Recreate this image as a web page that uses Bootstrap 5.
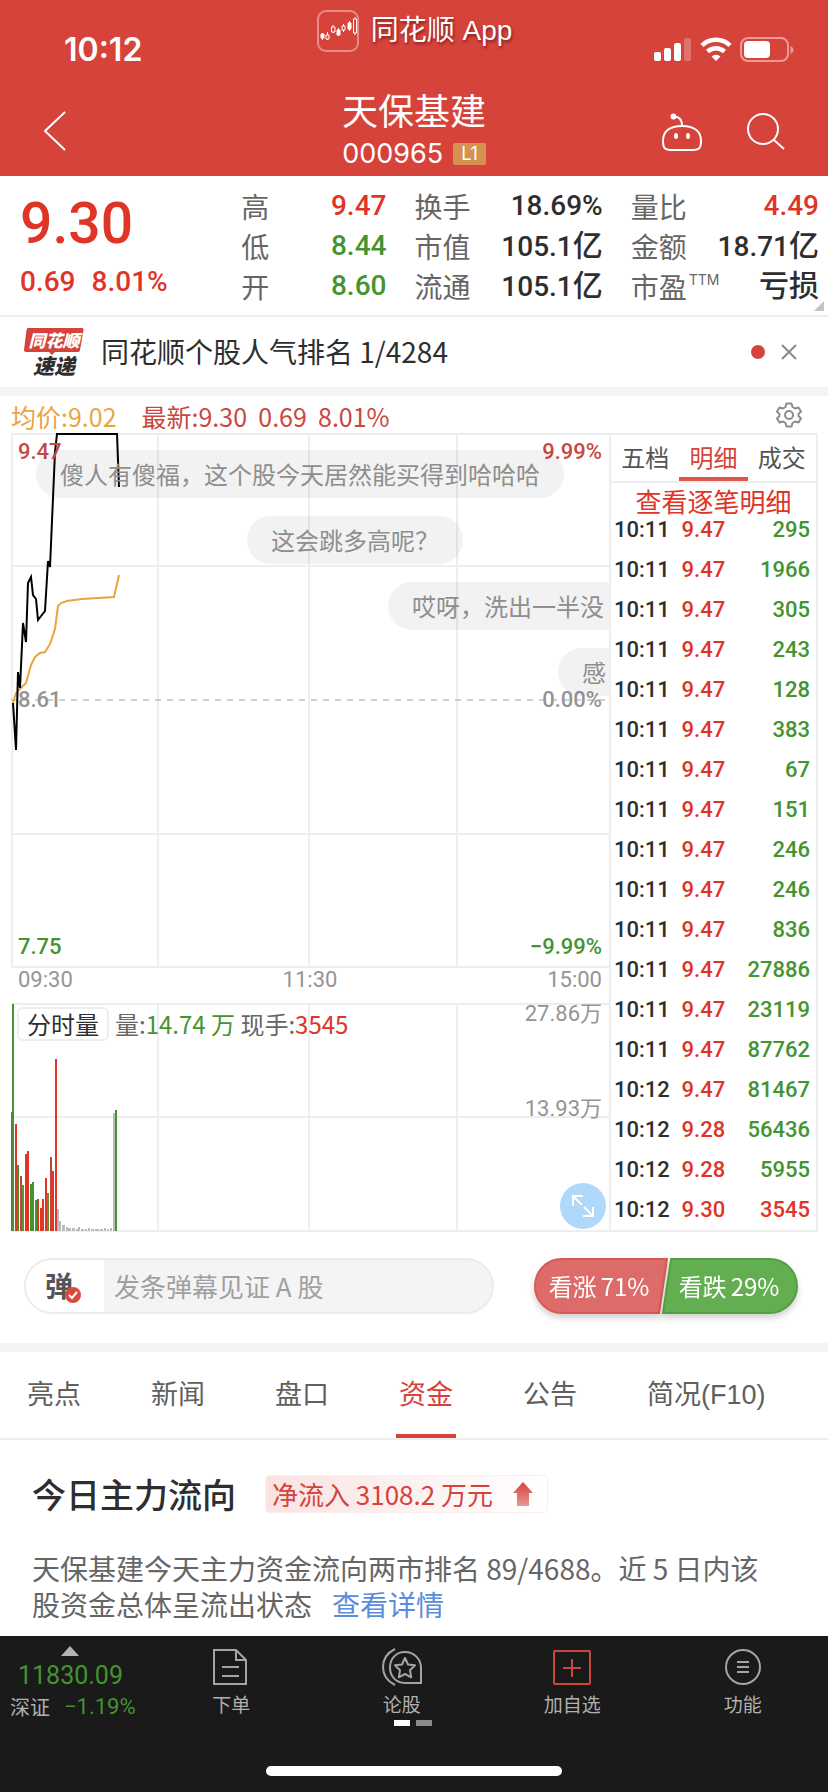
<!DOCTYPE html>
<html lang="zh-CN">
<head>
<meta charset="utf-8">
<meta name="viewport" content="width=device-width, initial-scale=1">
<title>天保基建 000965</title>
<link href="https://cdn.jsdelivr.net/npm/bootstrap@5.3.0/dist/css/bootstrap.min.css" rel="stylesheet">
<style>
  :root { --up:#d6433b; --rise:#de3527; --fall:#43942f; --ink:#2e2e2e; --soft:#666; --mute:#949494; --line:#eee; --num:Roboto,"Noto Sans CJK SC",sans-serif; }
  body { font-family:"Noto Sans CJK SC",sans-serif; color:var(--ink); background:#fff; line-height:1.2; min-height:100vh; display:flex; flex-direction:column; overflow-x:hidden; }
  h1,h2,p,dl,dt,dd { margin:0; font-weight:400; }
  button { border:0; background:none; padding:0; color:inherit; }
  a { text-decoration:none; color:inherit; }
  svg { display:block; }
  .num { font-family:var(--num); }
  .rise { color:var(--rise); } .fall { color:var(--fall); }
  .legend .avg { color:#eba53f; }
  .legend .last, .tag.hi { color:#c9473f; }
  .tag.mid { color:var(--mute); }

  .top-bar { background:var(--up); color:#fff; height:176px; }
  .status-row { display:grid; grid-template-columns:1fr auto 1fr; height:86px; padding:0 34px; }
  .clock { font:600 32px/36px Inter,sans-serif; margin:32px 0 0 30px; }
  .brand { padding-top:10px; column-gap:11px; }
  .brand-name { font:400 28px/42px "Liberation Sans","Noto Sans CJK SC",sans-serif; text-shadow:1px 2px 3px rgba(80,0,0,.6); }
  .status-icons { margin-top:37px; }
  .title-row { display:grid; grid-template-columns:1fr auto 1fr; height:90px; padding:0 43px; }
  .title-row h1 { font-size:36px; line-height:46px; }
  .code { font:400 27px/44px Inter,sans-serif; }
  .code-row { column-gap:10px; }
  .level { background:#d4914f; font:400 18px/22px Inter,sans-serif; padding:0 8px; border-radius:2px; }
  .tools { margin-top:26px; column-gap:42px; }

  .quote { position:relative; display:grid; grid-template-columns:193fr 145fr 188fr 188fr; column-gap:28px; padding:10px 9px 9px 20px; border-bottom:2px solid var(--line); }
  .price { font:500 57px/76px var(--num); color:var(--rise); }
  .change { font:500 28px/40px var(--num); color:var(--rise); column-gap:16px; }
  .quote dl > div { display:flex; justify-content:space-between; height:40px; line-height:40px; }
  .quote dt { font-size:28px; color:var(--soft); white-space:nowrap; }
  .quote dt sup { font:400 14px/14px Inter,sans-serif; top:-13px; margin-left:2px; }
  .quote dd { font:500 28px/40px var(--num); white-space:nowrap; }
  .quote dd span { font-size:30px; }
  .corner { position:absolute; right:4px; bottom:4px; }

  .flash { height:70px; padding:0 31px 0 24px; }
  .flash-text { font-size:28px; margin-left:17px; }
  .flash-logo { width:60px; text-align:center; font-style:italic; font-weight:900; }
  .flash-logo .l1 { position:relative; z-index:0; display:block; height:26px; line-height:24px; font-size:17px; color:#fff; }
  .flash-logo .l1 svg { position:absolute; left:0; top:0; z-index:-1; }
  .flash-logo .l2 { display:block; font-size:21px; line-height:22px; }
  .hot-dot { width:14px; height:14px; border-radius:50%; background:var(--up); }
  .band { height:9px; background:#f4f4f4; }

  .market { padding:0 10px 0 11px; }
  .legend { height:37px; font-size:25px; line-height:40px; white-space:nowrap; column-gap:25px; }
  .panels { display:flex; height:799px; }
  .charts { flex:598 1 0; min-width:0; position:relative; overflow:hidden; }
  .charts svg.plot { width:100%; }
  .plot * { vector-effect:non-scaling-stroke; }
  .grid-line { stroke:var(--line); stroke-width:2; fill:none; }
  .price-box { position:relative; height:535px; }
  .price-box .tag { position:absolute; font:500 22px/26px var(--num); }
  .times { display:flex; justify-content:space-between; height:35px; padding:0 7px; font:400 22px/24px var(--num); color:var(--mute); }
  .vol-box { position:relative; height:229px; }
  .vol-head { position:absolute; left:6px; top:4px; font-size:24px; line-height:32px; white-space:nowrap; color:var(--soft); }
  .vol-btn { border:2px solid var(--line); border-radius:6px; color:var(--ink); padding:0 8px; line-height:30px; background:#fff; margin-right:6px; }
  .vol-tag { position:absolute; right:7px; font:400 22px/28px var(--num); color:var(--mute); }
  .chat { position:absolute; height:48px; border-radius:24px; background:rgba(0,0,0,.05); color:#8e8e8e; font-size:24px; line-height:48px; padding:0 24px; white-space:nowrap; }
  .zoom-btn { position:absolute; right:3px; bottom:3px; width:46px; height:46px; border-radius:50%; background:#b0d8fb; }

  .ticks { flex:205 1 0; min-width:0; border:2px solid var(--line); display:flex; flex-direction:column; }
  .tick-tabs { display:flex; border-bottom:2px solid var(--line); height:48px; }
  .tick-tabs button { flex:1; font-size:24px; line-height:30px; padding-bottom:2px; color:#555; }
  .tick-tabs .on { color:var(--up); box-shadow:inset 0 -4px 0 #d9574b; }
  .tick-more { font-size:26px; line-height:36px; padding-bottom:2px; color:var(--rise); }
  .tick-view { flex:1 1 0; min-height:0; overflow:hidden; display:flex; flex-direction:column; justify-content:flex-end; }
  .tick-list { width:100%; font:500 22px/40px var(--num); }
  .tick-list td { height:40px; padding:0; }
  .tick-list td:first-child { padding-left:3px; }
  .tick-list td:last-child { padding-right:6px; text-align:right; }

  .act-row { padding:26px 30px 29px 24px; display:flex; justify-content:space-between; }
  .say { width:470px; height:56px; border:2px solid #ececec; border-radius:28px; background:#f4f4f4; overflow:hidden; display:flex; }
  .say-mode { width:78px; background:#fff; font-size:28px; font-weight:700; color:#555; position:relative; padding-right:12px; }
  .say-mode svg { position:absolute; right:23px; bottom:9px; }
  .say input { flex:1; min-width:0; border:0; background:none; font-size:26px; padding:0 10px; outline:0; }
  .say input::placeholder { color:#a0a0a0; opacity:1; }
  .vote { display:flex; width:264px; height:56px; }
  .vote button { color:#fff; font-size:24px; white-space:nowrap; filter:drop-shadow(0 4px 3px rgba(0,0,0,.18)); position:relative; z-index:0; flex:1; }
  .vote svg { position:absolute; z-index:-1; top:0; left:0; width:100%; height:100%; overflow:visible; }

  .sections { display:flex; height:88px; padding:0 27px; column-gap:70px; border-bottom:2px solid var(--line); }
  .sections a { font:400 27px/86px "Liberation Sans","Noto Sans CJK SC",sans-serif; color:#606060; white-space:nowrap; }
  .sections a.on { color:var(--up); margin:0 -3px; padding:0 3px; box-shadow:inset 0 -4px 0 var(--up); }

  .flow { padding:32px 60px 0 32px; }
  .flow h2 { font-size:34px; font-weight:500; line-height:44px; }
  .flow-tag { margin-left:29px; height:38px; padding:0 14px 0 6px; border:1px solid #fbeeed; border-radius:4px; background:linear-gradient(90deg,#f9e3e2,#fff); color:var(--up); font-size:26px; line-height:34px; white-space:nowrap; column-gap:20px; }
  .flow p { margin-top:34px; font-size:28px; line-height:36px; color:var(--soft); }
  .flow p a { color:#5b8cdb; margin-left:20px; }

  .dock { margin-top:auto; height:156px; background:#1a1a1a; color:#b0b0b0; position:relative; }
  .dock-items { display:flex; }
  .dock-index { width:140px; margin-right:6px; padding-top:10px; }
  .dock-index .idx { font:400 25px/32px var(--num); padding-left:18px; margin-top:4px; }
  .dock-index .row2 { padding-left:10px; font-size:20px; line-height:30px; column-gap:14px; }
  .dock-index .row2 .num { font-size:22px; }
  .dock-item { flex:1; font-size:19px; line-height:26px; padding-top:6px; }
  .dock-item svg { margin:0 auto 5px; }
  .pager { position:absolute; left:50%; bottom:66px; margin-left:-20px; gap:6px; }
  .pager i { width:16px; height:6px; background:#fff; } .pager i + i { background:#8b8b8b; }
  .home { position:absolute; left:50%; bottom:16px; width:296px; margin-left:-148px; height:10px; border-radius:5px; background:#fff; }
</style>
</head>
<body>
<header class="top-bar">
  <div class="status-row">
    <span class="clock">10:12</span>
    <div class="brand d-flex align-items-start">
      <svg width="44" height="42" viewBox="0 0 44 42" fill="none"><rect x="2" y="1" width="40" height="40" rx="8" stroke="#eb8a84" stroke-width="2"/><g stroke="#fff"><path d="M6.500 23v7M11.500 22v8M17 15v8M22.500 18v8M27.500 14v8M33.500 11v10M39 7v18"/><path fill="#fff" d="M5 24h3v4H5zM21 20h3v5h-3zM32 13h3v6h-3z"/><path fill="#d6433b" d="M10 25h3v4h-3zM15.500 17h3.500v5h-3.500zM26 16h3v4h-3zM37.500 9h3v14h-3z"/></g></svg>
      <span class="brand-name">同花顺 App</span>
    </div>
    <div class="status-icons d-flex justify-content-end align-items-start gap-2">
      <svg width="38" height="25" viewBox="0 0 38 25" fill="#fff"><rect y="15" width="7" height="9" rx="2"/><rect x="10" y="11" width="7" height="13" rx="2"/><rect x="20" y="6" width="7" height="18" rx="2"/><rect x="30" y="1" width="7" height="23" rx="2" opacity=".25"/></svg>
      <svg width="32" height="25" viewBox="0 0 32 25" fill="none" stroke="#fff" stroke-width="4.500"><path d="M2 8.500a20 20 0 0 1 28 0M7.500 14.500a12.500 12.500 0 0 1 17 0"/><path d="M16 24l-4.500-4.500a6.500 6.500 0 0 1 9 0z" fill="#fff" stroke="none"/></svg>
      <svg width="54" height="26" viewBox="0 0 54 26"><rect x="1" y="1" width="47" height="23" rx="7" fill="none" stroke="#eb9a95" stroke-width="2"/><rect x="4" y="4" width="26" height="17" rx="4" fill="#fff"/><path d="M50.500 9c4 2 4 6 0 8z" fill="#eb9a95"/></svg>
    </div>
  </div>
  <div class="title-row">
    <button class="align-self-start mt-4 text-start" aria-label="返回"><svg width="24" height="42" viewBox="0 0 24 42" fill="none" stroke="#fff" stroke-width="2"><path d="M22 2 2 21l20 19"/></svg></button>
    <div class="text-center">
      <h1>天保基建</h1>
      <div class="code-row d-flex align-items-center justify-content-center"><span class="code">000965</span><span class="level">L1</span></div>
    </div>
    <div class="tools d-flex justify-content-end align-items-start">
      <button aria-label="助手"><svg width="42" height="40" viewBox="0 0 42 40" fill="none" stroke="#fff" stroke-width="2"><path d="M13 5c5-1 8.500 3 8 10"/><circle cx="12.500" cy="4.500" r="2" fill="#fff"/><path d="M21 14c13 0 19 6 19 15 0 8-2 9-10 9H12c-8 0-10-1-10-9 0-9 6-15 19-15z"/><g fill="#fff" stroke="none"><ellipse cx="15" cy="24" rx="2" ry="3"/><ellipse cx="27" cy="24" rx="2" ry="3"/></g></svg></button>
      <button aria-label="搜索"><svg width="40" height="40" viewBox="0 0 40 40" fill="none" stroke="#fff" stroke-width="2"><circle cx="18" cy="17" r="15"/><path d="m29 28 10 9"/></svg></button>
    </div>
  </div>
</header>

<section class="quote">
  <div>
    <div class="price">9.30</div>
    <div class="change d-flex"><span>0.69</span><span>8.01%</span></div>
  </div>
  <dl>
    <div><dt>高</dt><dd class="rise">9.47</dd></div>
    <div><dt>低</dt><dd class="fall">8.44</dd></div>
    <div><dt>开</dt><dd class="fall">8.60</dd></div>
  </dl>
  <dl>
    <div><dt>换手</dt><dd>18.69%</dd></div>
    <div><dt>市值</dt><dd>105.1<span>亿</span></dd></div>
    <div><dt>流通</dt><dd>105.1<span>亿</span></dd></div>
  </dl>
  <dl>
    <div><dt>量比</dt><dd class="rise">4.49</dd></div>
    <div><dt>金额</dt><dd>18.71<span>亿</span></dd></div>
    <div><dt>市盈<sup>TTM</sup></dt><dd><span>亏损</span></dd></div>
  </dl>
  <svg class="corner" width="10" height="10"><path d="M10 0v10H0z" fill="#c4c4c4"/></svg>
</section>

<section class="flash d-flex align-items-center">
  <div class="flash-logo"><span class="l1"><svg width="60" height="28" viewBox="0 0 60 28"><path d="M4 0h54q2 0 1.500 2L56 22q0 2-2 2H31l-3 3-3-3H2q-2 0-2-2L2.500 2Q3 0 4 0z" fill="#d6433b"/></svg>同花顺</span><span class="l2">速递</span></div>
  <span class="flash-text">同花顺个股人气排名 1/4284</span>
  <span class="hot-dot ms-auto me-3"></span>
  <button aria-label="关闭"><svg width="16" height="16" viewBox="0 0 16 16" stroke="#8a8a8a" stroke-width="2"><path d="m1 1 14 14M15 1 1 15"/></svg></button>
</section>
<div class="band"></div>

<section class="market">
  <div class="legend d-flex">
    <span class="avg">均价:9.02</span>
    <span class="last">最新:9.30&nbsp; 0.69&nbsp; 8.01%</span>
    <button class="ms-auto me-3" aria-label="设置"><svg width="26" height="26" viewBox="0 0 26 26" fill="none" stroke="#8c8c8c" stroke-width="2" stroke-linejoin="round"><path d="M10.500 1.500h5l1 3.500 2.500 1.500 3.500-1 2.500 4-2.500 2.500v2l2.500 2.500-2.500 4-3.500-1-2.500 1.500-1 3.500h-5l-1-3.500L7 19.500l-3.500 1-2.500-4L3.500 14v-2L1 9.500l2.500-4 3.500 1L9.500 5z"/><circle cx="13" cy="13" r="4"/></svg></button>
  </div>
  <div class="panels">
    <div class="charts">
      <div class="price-box">
        <svg class="plot" height="535" viewBox="0 0 598 535" preserveAspectRatio="none" fill="none">
          <path class="grid-line" d="M0 1h598M0 133h598M0 401h598M0 534h598M1 0v535M147 0v535M298 0v535M446 0v535"/>
          <path d="M0 267h598" stroke="#a0a0a0" stroke-dasharray="6 6"/>
          <path stroke="#eba53f" stroke-width="2" d="M2 270 5 260 10 255 15 250 20 232 24 224 29 220 34 219 39 211 44 196 47 173 50 170 56 168 71 166 103 164 108 142"/>
          <path stroke="#000" stroke-width="2" d="M2 270 5 317 7 239 9 255 12 190 15 209 17 150 20 144 22 162 25 166 27 187 34 178 37 128 39 134 44 19 46 1H106L108 54"/>
        </svg>
        <span class="tag hi" style="left:7px;top:6px">9.47</span>
        <span class="tag hi" style="right:7px;top:6px">9.99%</span>
        <span class="tag mid" style="left:7px;top:254px">8.61</span>
        <span class="tag mid" style="right:7px;top:254px">0.00%</span>
        <span class="tag fall" style="left:7px;top:501px">7.75</span>
        <span class="tag fall" style="right:7px;top:501px">−9.99%</span>
        <span class="chat" style="left:25px;top:17px">傻人有傻福，这个股今天居然能买得到哈哈哈</span>
        <span class="chat" style="left:236px;top:83px">这会跳多高呢？</span>
        <span class="chat" style="left:377px;top:149px">哎呀，洗出一半没</span>
        <span class="chat" style="left:547px;top:215px">感</span>
      </div>
      <div class="times"><span>09:30</span><span>11:30</span><span>15:00</span></div>
      <div class="vol-box">
        <svg class="plot" height="229" viewBox="0 0 598 229" preserveAspectRatio="none">
          <path class="grid-line" d="M0 1h598M0 114h598M0 228h598M147 0v229M298 0v229M446 0v229"/>
          <g id="bars"></g>
        </svg>
        <div class="vol-head"><button class="vol-btn">分时量</button>量:<span class="fall">14.74 万</span> 现手:<span class="rise">3545</span></div>
        <span class="vol-tag" style="top:-3px">27.86万</span>
        <span class="vol-tag" style="top:92px">13.93万</span>
        <button class="zoom-btn" aria-label="全屏"><svg class="mx-auto" width="24" height="24" viewBox="0 0 24 24" fill="none" stroke="#fff" stroke-width="2"><path d="M2 12V2h10M2 2l9 9M22 13v9H12M22 22l-9-9"/></svg></button>
      </div>
    </div>
    <div class="ticks">
      <div class="tick-tabs"><button>五档</button><button class="on">明细</button><button>成交</button></div>
      <button class="tick-more">查看逐笔明细</button>
      <div class="tick-view"><table class="tick-list"><tbody id="ticks"></tbody></table></div>
    </div>
  </div>
</section>

<section class="act-row">
  <div class="say">
    <button class="say-mode" aria-label="弹幕开关">弹<svg width="16" height="16" viewBox="0 0 16 16"><circle cx="8" cy="8" r="8" fill="#d94a3c"/><path d="m4 8 3 3 5-6" fill="none" stroke="#fff" stroke-width="2"/></svg></button>
    <input type="text" aria-label="弹幕" placeholder="发条弹幕见证 A 股">
  </div>
  <div class="vote">
    <button><svg viewBox="0 0 132 56" preserveAspectRatio="none"><path d="M28 1h107l-8 54H28a27 27 0 0 1 0-54z" fill="#dd6b69" stroke="#d55a56" stroke-width="2"/></svg>看涨<span class="ms-1">71%</span></button>
    <button class="pe-1"><svg viewBox="0 0 132 56" preserveAspectRatio="none"><path d="M7 1h97a27 27 0 0 1 0 54H-1z" fill="#62ae50" stroke="#559f43" stroke-width="2"/></svg>看跌<span class="ms-1">29%</span></button>
  </div>
</section>
<div class="band"></div>

<nav class="sections">
  <a href="#">亮点</a><a href="#">新闻</a><a href="#">盘口</a><a href="#" class="on">资金</a><a href="#">公告</a><a href="#">简况(F10)</a>
</nav>

<section class="flow">
  <div class="d-flex align-items-center">
    <h2>今日主力流向</h2>
    <span class="flow-tag d-flex align-items-center">净流入 3108.2 万元<svg width="20" height="24" viewBox="0 0 20 24"><defs><linearGradient id="ar" x2="0" y2="1"><stop stop-color="#d6433b"/><stop offset="1" stop-color="#e99792"/></linearGradient></defs><path d="M10 0 20 11h-4v13H4V11H0z" fill="url(#ar)"/></svg></span>
  </div>
  <p>天保基建今天主力资金流向两市排名 89/4688。近 5 日内该股资金总体呈流出状态<a href="#">查看详情</a></p>
</section>

<footer class="dock">
  <div class="dock-items">
    <div class="dock-index">
      <svg class="mx-auto" width="18" height="10"><path d="M9 0l9 10H0z" fill="#b4b4b4"/></svg>
      <div class="idx fall">11830.09</div>
      <div class="row2 d-flex"><span>深证</span><span class="num fall">−1.19%</span></div>
    </div>
    <button class="dock-item"><svg width="38" height="38" viewBox="0 0 38 38" fill="none" stroke="#a4a4a4" stroke-width="2"><path d="M2 2h22l10 10v24H2zM24 2v10h10M10 19h17M10 28h17"/></svg>下单</button>
    <button class="dock-item"><svg width="42" height="38" viewBox="0 0 42 38" fill="none" stroke="#a4a4a4" stroke-width="2"><path d="M14 1C-2 9-2 29 14 37M40 20v15H24C4 35 4 4 24 4c9 0 16 7 16 16z"/><path stroke-linejoin="round" d="m24 10 3 6.500 7 .8-5 5 1.200 7-6.200-3.300-6.200 3.300 1.200-7-5-5 7-.8z"/></svg>论股</button>
    <button class="dock-item"><svg width="40" height="38" viewBox="0 0 40 38" fill="none" stroke="#c9473f" stroke-width="2"><rect x="2" y="3" width="36" height="33" rx="1"/><path d="M20 11v18M11 20h18"/></svg>加自选</button>
    <button class="dock-item"><svg width="38" height="38" viewBox="0 0 38 38" fill="none" stroke="#a4a4a4" stroke-width="2"><circle cx="19" cy="19" r="17"/><path d="M13 14h12M13 19h12M13 24h12"/></svg>功能</button>
  </div>
  <div class="pager d-flex"><i></i><i></i></div>
  <div class="home"></div>
</footer>

<script src="https://cdn.jsdelivr.net/npm/bootstrap@5.3.0/dist/js/bootstrap.bundle.min.js"></script>
<script>
  // time, price, volume, direction of the volume
  const trades = [['10:11','9.47',295],['10:11','9.47',1966],['10:11','9.47',305],['10:11','9.47',243],['10:11','9.47',128],['10:11','9.47',383],['10:11','9.47',67],['10:11','9.47',151],['10:11','9.47',246],['10:11','9.47',246],['10:11','9.47',836],['10:11','9.47',27886],['10:11','9.47',23119],['10:11','9.47',87762],['10:12','9.47',81467],['10:12','9.28',56436],['10:12','9.28',5955],['10:12','9.30',3545,'rise']];
  document.getElementById('ticks').innerHTML = trades.map(([t, p, v, d = 'fall']) => `<tr><td>${t}</td><td class="rise">${p}</td><td class="${d}">${v}</td></tr>`).join('');

  // minute volume: x, width, height, colour
  const R = '#de3527', G = '#43942f', B = '#9c5a35', N = '#bbb';
  const bars = [[0,1,119,B],[1,2,227,G],[4,2,107,R],[6,2,66,G],[9,2,55,'#c04637'],[11,2,46,'#6f8a30'],[14,2,77,R],[16,2,80,R],[19,2,47,G],[21,2,49,G],[24,2,31,G],[26,2,32,R],[29,2,23,R],[31,2,32,R],[34,2,53,R],[36,2,38,'#6f8a30'],[39,2,74,'#c04637'],[41,2,60,R],[44,2,172,R],[46,2,22,N],[48,2,10,N],[51,3,6,N],[55,2,4,N],[57,3,3,N],[61,3,3,N],[65,2,2,N],[67,2,4,N],[70,3,2,N],[74,2,2,N],[77,2,3,N],[80,3,2,N],[84,4,2,N],[89,3,2,N],[93,2,3,N],[96,2,2,N],[99,2,3,N],[102,2,118,N],[104,2,121,G]];
  document.getElementById('bars').innerHTML = bars.map(([x, w, h, c]) => `<rect x="${x}" y="${228 - h}" width="${w}" height="${h}" fill="${c}"/>`).join('');
</script>
</body>
</html>
